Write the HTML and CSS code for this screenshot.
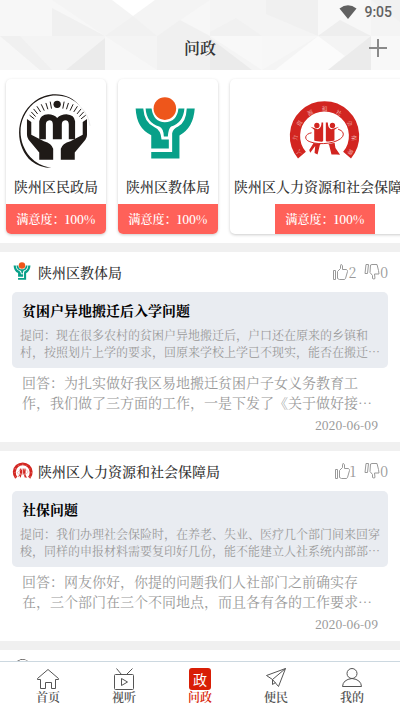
FILE: index.html
```html
<!DOCTYPE html>
<html lang="zh-CN">
  <head>
    <meta charset="utf-8">
    <meta name="viewport" content="width=device-width, initial-scale=1">
    <title>问政</title>
    <link rel="stylesheet" href="styles.css">
  </head>
  <body>
    <!-- Shared logos and icons -->
    <svg class="defs" width="0" height="0" aria-hidden="true">
      <symbol id="logo-minzheng" viewBox="52 54 232 232">
        <path fill="#1f1a17" d="M240 95C208 51 145 46 103 78C39 126 43 217 93 260Q118 280 152 280Q112 273 89 247C47 198 50 130 99 86C144 49 207 55 240 95Z"/>
        <path fill="none" stroke="#bbb" stroke-width="1" d="M240 95Q266 122 269 153"/>
        <circle cx="170" cy="88" r="11" fill="#1f1a17"/>
        <path fill="none" stroke="#1f1a17" stroke-width="3" d="M153 101L149 80M142 103L136 84M131 107L122 88M120 111L109 94M111 117L99 102M105 125L92 111M101 132L87 121M187 101L191 80M198 103L204 84M209 107L218 88M220 111L231 94M230 117L242 102M237 125L250 111M242 132L256 121"/>
        <path fill="#1f1a17" d="M116 193V139Q119 119 143 118Q160 118 170 129Q181 118 198 118Q222 120 224 139V193H205V149Q205 136 194 136Q184 137 184 149V193H157V149Q157 136 147 136Q136 137 136 149V193Z"/>
        <path fill="#1f1a17" d="M79 132L92 141V180L130 199Q154 206 158 222V255H116V233L84 195Q79 188 79 180ZM260 132L247 141V180L210 199Q185 206 181 222V255H223V233L255 195Q260 188 260 180Z"/>
      </symbol>
      <symbol id="logo-jiaoti" viewBox="388 54 232 232">
        <circle cx="493" cy="101" r="34" fill="#ee561b"/>
        <g fill="#08a089">
          <path d="M405 101H428Q431 145 462 157Q481 165 483 194H505V221H452V181Q408 162 405 101Z"/>
          <path d="M435 101H453Q459 142 493 142Q529 142 534 101H552Q548 145 512 155Q504 160 502 185H490Q489 160 476 155Q438 145 435 101Z"/>
          <path d="M559 101H583Q579 160 537 182V251H452V232H515V175Q518 162 533 155Q557 143 559 101Z"/>
        </g>
      </symbol>
      <symbol id="logo-renshe" viewBox="259 54 232 232">
        <path fill="none" stroke="#d22520" stroke-width="31" d="M304 241A89 89 0 1 1 440 241"/>
        <g fill="#f7c9c6" font-family="Noto Serif CJK SC, Noto Sans CJK SC, serif" font-size="17" text-anchor="middle">
          <text transform="translate(372 191) rotate(-118) translate(0 -82)">人</text>
          <text transform="translate(372 191) rotate(-89) translate(0 -82)">力</text>
          <text transform="translate(372 191) rotate(-59) translate(0 -82)">资</text>
          <text transform="translate(372 191) rotate(-29) translate(0 -82)">源</text>
          <text transform="translate(372 191) translate(0 -82)">和</text>
          <text transform="translate(372 191) rotate(29) translate(0 -82)">社</text>
          <text transform="translate(372 191) rotate(59) translate(0 -82)">会</text>
          <text transform="translate(372 191) rotate(89) translate(0 -82)">保</text>
          <text transform="translate(372 191) rotate(118) translate(0 -82)">障</text>
        </g>
        <g fill="#d22520">
          <circle cx="349" cy="152" r="8"/>
          <circle cx="396" cy="152" r="8"/>
          <path d="M368 143V198L358 211L351 239L342 235L344 214L329 234L326 226L341 202V165L330 156L352 163Q363 160 363 143Z"/>
          <path d="M376 143V198L386 211L393 239H408L419 240L405 220L402 202V165L416 156L392 163Q382 160 382 143Z"/>
        </g>
        <path fill="none" stroke="#fff" stroke-width="7" d="M318 182C312 207 406 215 426 187"/>
        <path fill="none" stroke="#d22520" stroke-width="3" d="M333 174C313 177 308 194 328 201C360 213 413 205 427 185Q434 170 413 163"/>
      </symbol>
      <symbol id="icon-up" viewBox="0 0 16 16">
        <path d="M1.500 6.500H3.500V15.500H1.500ZM5.500 7.500L8.500 4.500V1.500Q8.500 .5 9.500 .5Q11 1 10.500 5.500H14.500Q15.500 6 15.500 7.500L13.500 14.500Q13 15.500 12 15.500H7.500L5.500 14.500Z"/>
      </symbol>
      <symbol id="icon-down" viewBox="0 0 16 16">
        <path d="M2 .5H4.500L3.500 9.500H1ZM6.500 1L8 .5H13L14.500 6.500L15 10H10.500L11 14.500Q10 15.500 8.500 14.500V11.500L6 8.500Z"/>
      </symbol>
    </svg>

    <header class="topbar">
      <svg class="topbar-pattern" viewBox="0 0 400 70" preserveAspectRatio="xMidYMid slice" aria-hidden="true">
        <rect width="400" height="70" fill="#f4f4f4"/>
        <path fill="#f7f7f7" d="M0 0H52V36H105L52 0V36H0ZM157 36L210 0V36ZM318 36L371 0V36ZM262 36V70L318 36ZM105 36L157 70H105ZM0 36L40 70H0Z"/>
        <path fill="#fff" d="M112 0H155L133 16Z"/>
        <path fill="#f8f8f8" d="M318 0H371L318 36ZM210 36H262V70ZM371 36V70H400V36Z"/>
        <path fill="#fbfbfb" d="M275 70L318 36L345 56L328 70Z"/>
        <path fill="#f0f0f0" d="M52 8L105 36H52ZM266 0H318V36L266 14ZM157 36H210V70H157ZM0 36H20L52 70H40ZM180 20L210 36H157Z"/>
        <path fill="#ebebeb" d="M371 36V70H328ZM210 38L252 70H210ZM66 70L105 38V70Z"/>
        <path fill="#eee" d="M318 36L340 20L371 36Z"/>
        <path fill="#f1f1f1" d="M105 36L133 16L157 36ZM210 32L236 18L262 36H210ZM371 0H400V22Z"/>
      </svg>
      <div class="status">
        <svg width="18" height="14" viewBox="0 0 18 14" aria-hidden="true"><path fill="#616161" d="M.5 3.500Q9-3 17.500 3.500L9 14Z"/></svg>
        <span>9:05</span>
      </div>
      <div class="titlebar">
        <h1 class="title">问政</h1>
        <button class="add" type="button" aria-label="添加">
          <svg width="18" height="18" viewBox="0 0 18 18"><path fill="none" stroke="#8a8a8a" stroke-width="2" d="M9 0V18M0 9H18"/></svg>
        </button>
      </div>
    </header>

    <main class="content">
      <section class="bureaus">
        <a class="bureau" href="#">
          <svg class="bureau-logo"><use href="#logo-minzheng"/></svg>
          <span class="bureau-name">陕州区民政局</span>
          <span class="rate">满意度：100%</span>
        </a>
        <a class="bureau" href="#">
          <svg class="bureau-logo"><use href="#logo-jiaoti"/></svg>
          <span class="bureau-name">陕州区教体局</span>
          <span class="rate">满意度：100%</span>
        </a>
        <a class="bureau" href="#">
          <svg class="bureau-logo"><use href="#logo-renshe"/></svg>
          <span class="bureau-name">陕州区人力资源和社会保障局</span>
          <span class="rate">满意度：100%</span>
        </a>
      </section>

      <article class="post">
        <div class="post-head">
          <svg class="post-logo"><use href="#logo-jiaoti"/></svg>
          <span class="post-bureau">陕州区教体局</span>
          <button class="vote" type="button" aria-label="赞 2"><svg><use href="#icon-up"/></svg>2</button>
          <button class="vote" type="button" aria-label="踩 0"><svg><use href="#icon-down"/></svg>0</button>
        </div>
        <div class="question">
          <h2 class="question-title">贫困户异地搬迁后入学问题</h2>
          <p class="question-text">提问：现在很多农村的贫困户异地搬迁后，户口还在原来的乡镇和村，按照划片上学的要求，回原来学校上学已不现实，能否在搬迁…</p>
        </div>
        <p class="answer">回答：为扎实做好我区易地搬迁贫困户子女义务教育工作，我们做了三方面的工作，一是下发了《关于做好接…</p>
        <time class="date" datetime="2020-06-09">2020-06-09</time>
      </article>

      <article class="post">
        <div class="post-head">
          <svg class="post-logo"><use href="#logo-renshe"/></svg>
          <span class="post-bureau">陕州区人力资源和社会保障局</span>
          <button class="vote" type="button" aria-label="赞 1"><svg><use href="#icon-up"/></svg>1</button>
          <button class="vote" type="button" aria-label="踩 0"><svg><use href="#icon-down"/></svg>0</button>
        </div>
        <div class="question">
          <h2 class="question-title">社保问题</h2>
          <p class="question-text">提问：我们办理社会保险时，在养老、失业、医疗几个部门间来回穿梭，同样的申报材料需要复印好几份，能不能建立人社系统内部部…</p>
        </div>
        <p class="answer">回答：网友你好，你提的问题我们人社部门之前确实存在，三个部门在三个不同地点，而且各有各的工作要求…</p>
        <time class="date" datetime="2020-06-09">2020-06-09</time>
      </article>

      <article class="post">
        <div class="post-head">
          <svg class="post-logo"><use href="#logo-minzheng"/></svg>
        </div>
      </article>
    </main>

    <nav class="tabs">
      <a class="tab" href="#">
        <svg class="tab-icon" viewBox="0 0 22 22"><path d="M.5 10.500L11 1.500L21.500 10.500V11.500H18.500V20.500H14.500V14.500H8.500V20.500H3.500V11.500H.5Z"/></svg>
        首页
      </a>
      <a class="tab" href="#">
        <svg class="tab-icon" viewBox="0 0 22 22"><path d="M3.500 .5L8.500 6.500M19.500 .5L13.500 6.500M2.500 6.500H19.500Q20.500 6.500 20.500 7.500V20.500Q20.500 21.500 19.500 21.500H2.500Q1.500 21.500 1.500 20.500V7.500Q1.500 6.500 2.500 6.500ZM8.500 10.500V17.500L14.500 14Z"/></svg>
        视听
      </a>
      <a class="tab active" href="#">
        <span class="tab-badge">政</span>
        问政
      </a>
      <a class="tab" href="#">
        <svg class="tab-icon" viewBox="0 0 22 22"><path d="M20.500 .5L1.500 7.500L7.500 11.500L13.500 18.500ZM20.500 .5L7.500 11.500V16.500L10.500 14.500"/></svg>
        便民
      </a>
      <a class="tab" href="#">
        <svg class="tab-icon" viewBox="0 0 22 22"><path d="M11 .5A5 5 0 1 1 11 10.500A5 5 0 1 1 11 .5ZM1.500 18.500Q2 11.500 11 10.500Q20 11.500 20.500 18.500Z"/></svg>
        我的
      </a>
    </nav>
  </body>
</html>
```

FILE: styles.css
```css
* {
  box-sizing: border-box;
}

body {
  background: #fff;
  color: #333;
  display: flex;
  flex-direction: column;
  font-family: "Noto Serif CJK SC", "Liberation Serif", "Noto Sans CJK SC", serif;
  height: 100vh;
  margin: 0;
  overflow: hidden;
}

h1, h2, p {
  margin: 0;
}

a {
  color: inherit;
  text-decoration: none;
}

button {
  background: none;
  border: 0;
  color: inherit;
  font: inherit;
  padding: 0;
}

.defs {
  position: absolute;
}

/* top bar */
.topbar {
  flex: none;
  position: relative;
}

.topbar-pattern {
  height: 100%;
  left: 0;
  position: absolute;
  top: 0;
  width: 100%;
  z-index: -1;
}

.status {
  align-items: center;
  color: #616161;
  display: flex;
  font: 500 14px/24px Roboto, sans-serif;
  gap: 7px;
  height: 24px;
  justify-content: flex-end;
  padding-right: 8px;
}

.titlebar {
  align-items: center;
  display: grid;
  grid-template-columns: 1fr auto 1fr;
  height: 46px;
  padding: 2px 13px 0;
}

.title {
  font-size: 16px;
  font-weight: 600;
  grid-column: 2;
  line-height: 24px;
}

.add {
  display: flex;
  justify-self: end;
}

/* scrolling content */
.content {
  flex: 1;
  min-height: 0;
  overflow: hidden;
}

.bureaus {
  display: flex;
  gap: 12px;
  overflow-x: auto;
  padding: 9px 6px;
  scrollbar-width: none;
}

.bureau {
  align-items: center;
  background: #fff;
  border-radius: 5px;
  box-shadow: 0 1px 3px #ccc;
  display: flex;
  flex: none;
  flex-direction: column;
  min-width: 100px;
  overflow: hidden;
  padding-top: 14px;
}

.bureau-logo {
  height: 77px;
  width: 77px;
}

.bureau-name {
  font-size: 14px;
  font-weight: 500;
  line-height: 20px;
  margin: 6px 4px 8px;
}

.rate {
  background: #ff6159;
  color: #fff;
  font-size: 12px;
  font-weight: 600;
  line-height: 30px;
  min-width: 100px;
  text-align: center;
}

.post {
  border-top: 9px solid #f0f0f0;
  display: flex;
  flex-direction: column;
  padding: 10px 12px 7px;
}

.post-head {
  align-items: center;
  display: flex;
  height: 20px;
  margin-bottom: 10px;
}

.post-logo {
  height: 22px;
  width: 22px;
}

.post-bureau {
  flex: 1;
  font-size: 14px;
  font-weight: 500;
  line-height: 20px;
  margin-left: 4px;
}

.vote {
  align-items: center;
  color: #999;
  display: flex;
  font-size: 14px;
  line-height: 20px;
  margin-left: 8px;
}

.vote svg {
  fill: none;
  height: 16px;
  stroke: #999;
  width: 16px;
}

.question {
  background: #e9ecf1;
  border-radius: 5px;
  padding: 8px;
}

.question-title {
  color: #000;
  font-size: 14px;
  font-weight: 700;
  line-height: 20px;
  margin: 0 2px 6px;
}

.question-text {
  color: #999;
  font-size: 12px;
  line-height: 17px;
}

.answer {
  color: #999;
  font-size: 14px;
  line-height: 20px;
  margin: 4px 10px 3px;
}

.date {
  align-self: flex-end;
  color: #999;
  font-size: 12px;
  font-weight: 500;
  line-height: 20px;
  margin-right: 10px;
}

/* bottom tabs */
.tabs {
  background: #fff;
  border-top: 1px solid #ccd8e0;
  display: flex;
  flex: none;
  padding: 6px 10px;
}

.tab {
  align-items: center;
  color: #555;
  display: flex;
  flex: 1;
  flex-direction: column;
  font-size: 12px;
  font-weight: 600;
  line-height: 14px;
}

.tab-icon {
  fill: none;
  height: 22px;
  stroke: #555;
  width: 22px;
}

.tab-badge {
  background: #d81e06;
  border-radius: 3px;
  color: #fff;
  font: 14px/22px "Noto Sans CJK SC", sans-serif;
  text-align: center;
  width: 22px;
}

.active {
  color: #d81e06;
}
```
